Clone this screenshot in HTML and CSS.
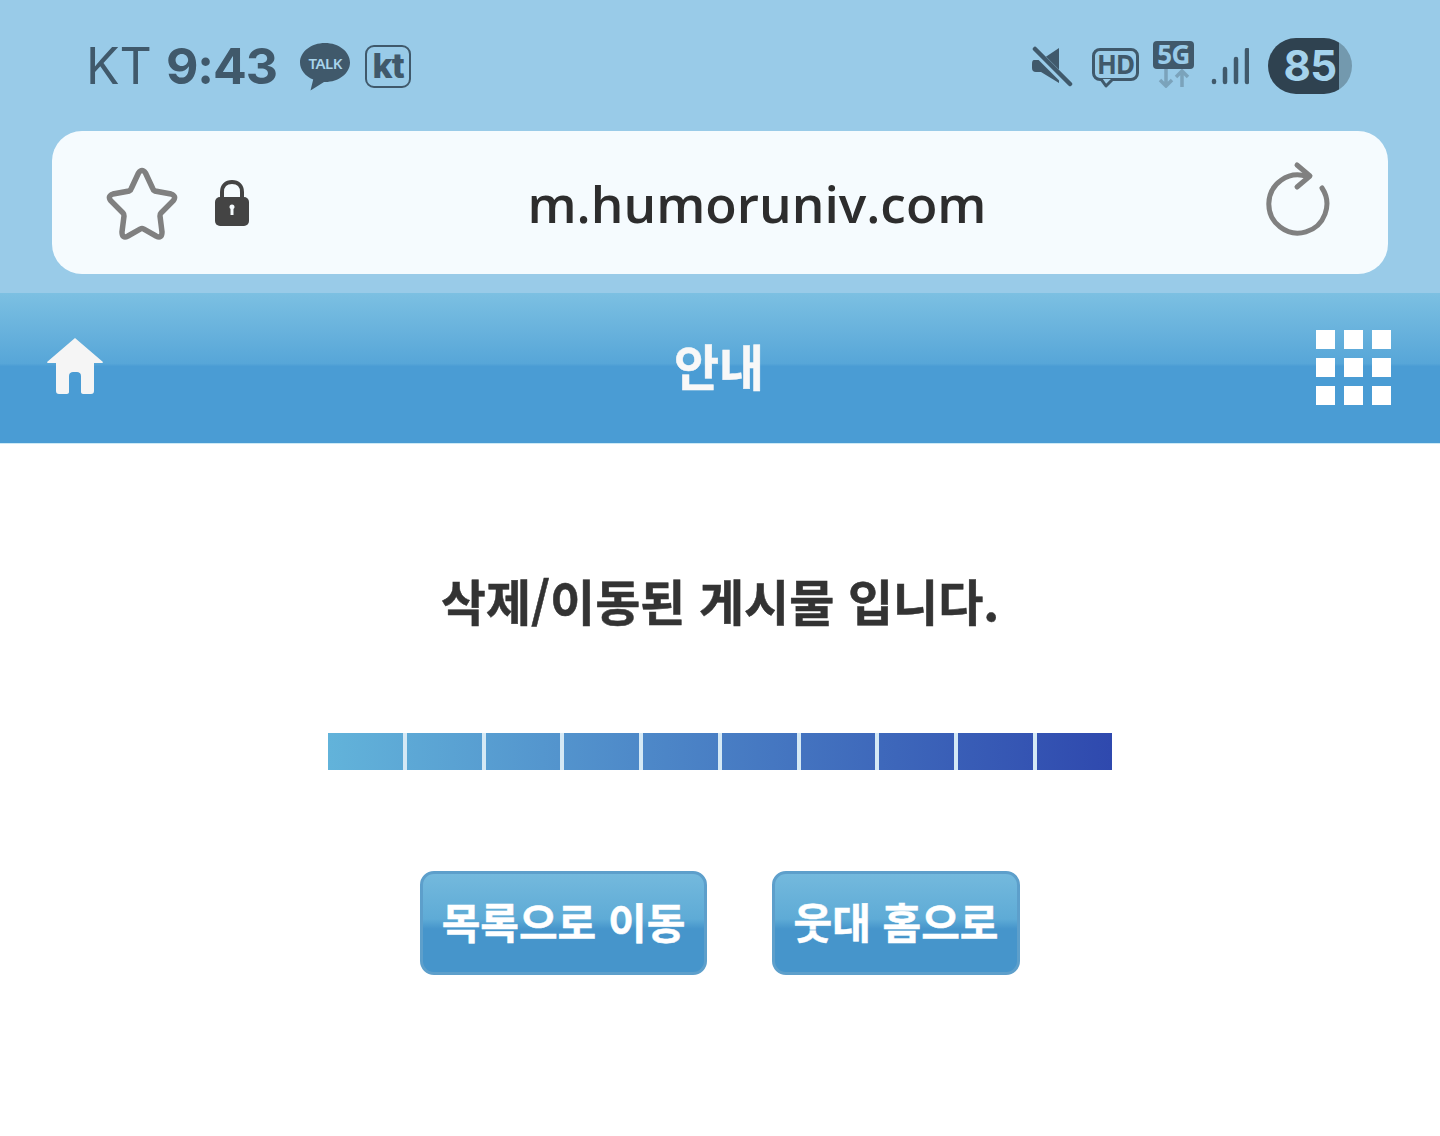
FILE: index.html
```html
<!DOCTYPE html>
<html lang="ko">
<head>
    <meta charset="UTF-8">
    <meta name="viewport" content="width=device-width, initial-scale=1.0">
    <title>안내</title>
    <link rel="stylesheet" href="styles.css">
</head>
<body>
    <!-- Phone status bar -->
    <div class="status-bar">
        <div class="status-left">
            <span class="carrier">KT</span>
            <span class="clock">9:43</span>
            <span class="talk-icon">
                <svg width="50" height="48" viewBox="0 0 50 48"><path d="M25 0C11.2 0 0 8.700 0 19.500C0 27 5.300 33.300 13.200 36.500L10.500 47.500L24 38.900C24.300 39 24.700 39 25 39C38.800 39 50 30.300 50 19.500C50 8.700 38.800 0 25 0Z" fill="#40596b"/></svg>
                <span class="talk-text">TALK</span>
            </span>
            <span class="kt-icon">kt</span>
        </div>
        <div class="status-right">
            <svg class="mute-icon" width="42" height="42" viewBox="0 0 42 42"><path d="M3 14H10L28 2V37L10 26H5Q1 26 1 22V18Q1 14 3 14Z" fill="#40596b"/><path d="M3 4L38 39" stroke="#99cbe8" stroke-width="7.500"/><path d="M4 3L39 38" stroke="#40596b" stroke-width="4.500" stroke-linecap="round"/></svg>
            <span class="hd-icon">HD<svg class="hd-tail" width="14" height="9" viewBox="0 0 14 9"><path d="M1 0L6 7L13 0" fill="#99cbe8" stroke="#40596b" stroke-width="3" stroke-linejoin="round"/></svg></span>
            <span class="net-icon">
                <span class="net-label">5G</span>
                <svg width="32" height="19" viewBox="0 0 32 19"><path d="M8 0V17M2 11L8 17L14 11M24 18V2M18 8L24 2L30 8" fill="none" stroke="#7ba3bb" stroke-width="3.500"/></svg>
            </span>
            <svg class="signal-icon" width="38" height="38" viewBox="0 0 38 38"><path d="M3 33V34M14 21V34M25 11V34M36 2V34" stroke="#40596b" stroke-width="4.500" stroke-linecap="round"/></svg>
            <span class="battery">85</span>
        </div>
    </div>

    <!-- Browser address bar -->
    <div class="address-wrap">
        <div class="address-bar">
            <svg class="star-icon" width="80" height="80" viewBox="0 0 80 80"><path d="M36.500 9Q40 4 43.500 9L50.500 24Q51 26 53 27L69 30Q75 32 71 37L59 49Q58 50 58 52L60 68Q60 75 54 72L41.500 65Q40 64 38.500 65L26 72Q20 75 20 68L22 52Q22 50 21 49L9 37Q5 32 11 30L27 27Q29 26 29.500 24Z" fill="none" stroke="#808080" stroke-width="5.500"/></svg>
            <svg class="lock-icon" width="36" height="48" viewBox="0 0 36 48"><path d="M8 20V13C8 7 12 3 18 3C24 3 28 7 28 13V20" fill="none" stroke="#444" stroke-width="4"/><rect x="1" y="18" width="34" height="29" rx="5" fill="#444"/><path d="M15.500 28A2.500 2.500 0 1 1 20.500 28C20.500 29 20 29.500 19.500 30V36H16.500V30C16 29.500 15.500 29 15.500 28Z" fill="#f5fbfe"/></svg>
            <div class="url">m.humoruniv.com</div>
            <svg class="reload-icon" width="70" height="80" viewBox="0 0 70 80"><path d="M58 29A29 29 0 1 1 43 17.500" fill="none" stroke="#808080" stroke-width="5" stroke-linecap="round"/><path d="M33 6L46 17L33 28" fill="none" stroke="#808080" stroke-width="5" stroke-linecap="round" stroke-linejoin="round"/></svg>
        </div>
    </div>

    <!-- Site header -->
    <div class="site-header">
        <svg class="home-icon" width="58" height="58" viewBox="0 0 58 58"><path d="M29 1L57 25C57 26 56 26 54 26H48V54C48 56 47 57 45 57H37C36 57 35 56 35 55V39C35 36 33 35 31 35H27C25 35 23 36 23 39V55C23 56 22 57 21 57H13C11 57 10 56 10 54V26H4C2 26 1 26 1 25Z" fill="#f5f5f5"/></svg>
        <div class="header-title">안내</div>
        <div class="menu-grid">
            <span></span><span></span><span></span>
            <span></span><span></span><span></span>
            <span></span><span></span><span></span>
        </div>
    </div>

    <!-- Notice -->
    <div class="content">
        <div class="message">삭제/이동된 게시물 입니다.</div>
        <div class="progress">
            <span></span><span></span><span></span><span></span><span></span>
            <span></span><span></span><span></span><span></span><span></span>
        </div>
        <div class="buttons">
            <a class="btn btn-list">목록으로 이동</a>
            <a class="btn btn-home">웃대 홈으로</a>
        </div>
    </div>
</body>
</html>
```

FILE: styles.css
```css
* {
    box-sizing: border-box;
}

body {
    margin: 0;
    background: #fff;
    font-family: "Noto Sans CJK KR", "Noto Sans", sans-serif;
}

/* Status bar */
.status-bar {
    height: 131px;
    background: #99cbe8;
    padding: 38px 88px 0 86px;
    display: flex;
    justify-content: space-between;
    align-items: flex-start;
    color: #40596b;
}

.status-left {
    display: flex;
    align-items: center;
    height: 56px;
    font-family: Inter, "Noto Sans", sans-serif;
}

.carrier {
    font-size: 50px;
    font-weight: 400;
    margin-right: 14px;
}

.clock {
    font-size: 50px;
    font-weight: 700;
    letter-spacing: -1px;
    margin-right: 23px;
}

.talk-icon {
    position: relative;
    width: 50px;
    height: 48px;
    margin-right: 15px;
    margin-top: 2px;
}

.talk-text {
    position: absolute;
    left: 0;
    right: 0;
    top: 10px;
    text-align: center;
    font-size: 15px;
    font-weight: 600;
    letter-spacing: -0.5px;
    color: #a9d4ec;
    font-family: "Noto Sans", sans-serif;
}

.kt-icon {
    width: 46px;
    height: 43px;
    border: 2px solid #40596b;
    border-radius: 9px;
    font-size: 34px;
    font-weight: 800;
    line-height: 38px;
    text-align: center;
    letter-spacing: -1px;
    margin-top: 1px;
}

.status-right {
    display: flex;
    align-items: center;
    height: 56px;
}

.mute-icon {
    margin-right: 19px;
    margin-top: 2px;
}

.hd-icon {
    position: relative;
    width: 47px;
    height: 33px;
    border: 3px solid #40596b;
    border-radius: 8px;
    font-family: "Noto Sans", sans-serif;
    font-size: 26px;
    font-weight: 700;
    line-height: 26px;
    text-align: center;
    letter-spacing: -1px;
    margin-right: 14px;
    margin-top: -3px;
}

.hd-tail {
    position: absolute;
    left: 5px;
    bottom: -10px;
}

.net-icon {
    display: flex;
    flex-direction: column;
    align-items: center;
    width: 41px;
    margin-right: 17px;
    margin-top: -3px;
}

.net-label {
    width: 41px;
    height: 28px;
    background: #40596b;
    border-radius: 4px;
    color: #99cbe8;
    font-family: "Noto Sans", sans-serif;
    font-size: 26px;
    font-weight: 700;
    line-height: 27px;
    text-align: center;
    letter-spacing: -0.5px;
}

.signal-icon {
    margin-right: 19px;
    margin-top: 1px;
}

.battery {
    width: 84px;
    height: 56px;
    border-radius: 28px;
    background: linear-gradient(90deg, #2f4250 84%, #7399ae 84%);
    color: #a4d2ec;
    font-family: Inter, "Noto Sans", sans-serif;
    font-size: 42px;
    font-weight: 700;
    line-height: 56px;
    letter-spacing: -0.5px;
    text-align: center;
}

/* Address bar */
.address-wrap {
    height: 162px;
    background: #99cbe8;
    padding: 0 52px;
}

.address-bar {
    position: relative;
    height: 143px;
    background: #f5fbfe;
    border-radius: 30px;
    padding: 0 54px 0 50px;
    display: flex;
    align-items: center;
}

.star-icon {
    margin-top: 2px;
}

.lock-icon {
    margin-left: 32px;
    margin-top: 1px;
}

.url {
    flex: 1;
    text-align: center;
    font-family: "Open Sans", "Noto Sans", sans-serif;
    font-size: 51.5px;
    font-weight: 600;
    color: #2d2d2d;
}

.reload-icon {
    margin-top: -7px;
}

/* Site header */
.site-header {
    height: 151px;
    background: linear-gradient(180deg, #7cc0e2 0%, #57a6d8 47%, #4a9cd4 49%, #4a9cd4 100%);
    border-bottom: 1px solid #cdeaf6;
    padding: 0 49px 0 46px;
    display: flex;
    justify-content: space-between;
    align-items: center;
}

.home-icon {
    margin-top: -5px;
}

.header-title {
    font-size: 49px;
    font-weight: 700;
    color: #f8f8f8;
    -webkit-text-stroke: 0.5px #f8f8f8;
    margin-left: 18px;
    margin-top: -7px;
}

.menu-grid {
    display: grid;
    grid-template-columns: repeat(3, 19px);
    grid-auto-rows: 19px;
    gap: 9px;
    margin-top: -1px;
}

.menu-grid span {
    background: #fff;
}

/* Notice */
.content {
    display: flex;
    flex-direction: column;
    align-items: center;
    padding-top: 121px;
}

.message {
    font-size: 49px;
    font-weight: 700;
    color: #333;
    -webkit-text-stroke: 0.5px #333;
    line-height: 70px;
}

.progress {
    display: flex;
    width: 784px;
    height: 37px;
    margin-top: 98px;
    background: linear-gradient(90deg, #62b3da 0%, #2f49ae 100%);
}

.progress span {
    flex: 1;
    border-right: 4px solid #d5e9f5;
}

.progress span:last-child {
    flex: 0 0 75px;
    border-right: 0;
}

.buttons {
    display: flex;
    gap: 65px;
    margin-top: 101px;
}

.btn {
    height: 104px;
    border: 3px solid #5d9fcb;
    border-radius: 14px;
    background: linear-gradient(180deg, #74b9dd 0%, #5eabd6 46%, #4695cb 56%, #4695cb 100%);
    color: #fff;
    font-size: 42px;
    font-weight: 700;
    -webkit-text-stroke: 0.5px #fff;
    line-height: 94px;
    text-align: center;
}

.btn-list {
    width: 287px;
}

.btn-home {
    width: 248px;
}
```
